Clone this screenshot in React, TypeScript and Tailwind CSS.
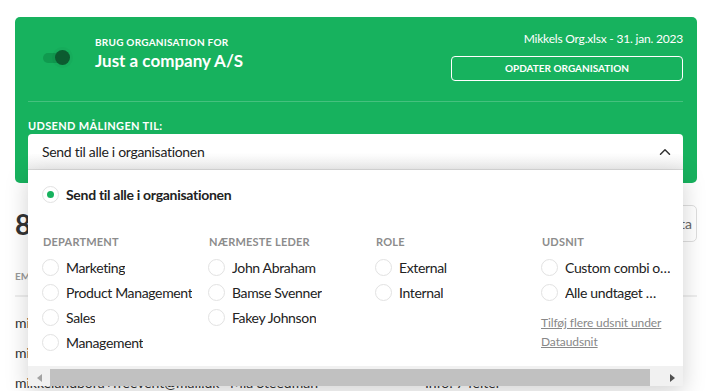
import React from "react"
import { ChevronUp } from "lucide-react"

type Group = {
  title: string
  width: string
  items: string[]
  link?: boolean
}

const groups: Group[] = [
  {
    title: "Department",
    width: "w-[166px]",
    items: ["Marketing", "Product Management", "Sales", "Management"],
  },
  {
    title: "Nærmeste leder",
    width: "w-[167px]",
    items: ["John Abraham", "Bamse Svenner", "Fakey Johnson"],
  },
  { title: "Role", width: "w-[166px]", items: ["External", "Internal"] },
  {
    title: "Udsnit",
    width: "w-[132px]",
    items: ["Custom combi o…", "Alle undtaget …"],
    link: true,
  },
]

const rows = [
  ["mikkel+1@mailinator.com", "John Abraham", "Info: 6 felter"],
  ["mikkel+2@mailinator.com", "Bamse Svenner", "Info: 6 felter"],
  ["mikkelandbora+freevent@mail.dk", "Mia Steedman", "Info: 7 felter"],
]

const Radio = ({ checked = false }: { checked?: boolean }) => (
  <span className="flex h-[17px] w-[17px] shrink-0 items-center justify-center rounded-full border border-[#e2e2e2] bg-white">
    {checked && <span className="h-[7px] w-[7px] rounded-full bg-[#17b25e]" />}
  </span>
)

const App = () => {
  return (
    <div className="h-[391px] w-[708px] overflow-hidden bg-white pl-[15px] pt-[17px] font-['Lato',sans-serif] [font-variant-ligatures:none]">
      {/* organisation card */}
      <div className="w-[682px] rounded-[5px] bg-[#17b25e] pb-[13px] pl-[13px] pr-[14px] pt-[14px] text-white">
        <div className="flex justify-between">
          <div className="flex items-start pt-[5px]">
            <div className="relative ml-[15px] mt-[17px] h-[10px] w-[23px] rounded-full bg-[#109a4f]">
              <span className="absolute right-[-4px] top-[-3px] h-[15px] w-[15px] rounded-full bg-[#0c5b30] shadow-[0_0_0_3px_rgba(0,0,0,0.03)]" />
            </div>
            <div className="ml-[29px]">
              <p className="text-[10px] font-bold uppercase leading-[12px] tracking-[0.25px]">
                Brug organisation for
              </p>
              <p className="mt-[2px] text-[17px] font-bold leading-[21px]">
                Just a company A/S
              </p>
            </div>
          </div>
          <div className="flex w-[232px] flex-col items-end">
            <p className="text-[12px] leading-[16px] tracking-[-0.2px]">
              Mikkels Org.xlsx - 31. jan. 2023
            </p>
            <button className="mt-[9px] h-[25px] w-full rounded-[4px] border border-white text-[10px] font-bold uppercase">
              Opdater organisation
            </button>
          </div>
        </div>

        <div className="mt-[20px] h-px bg-white/20" />

        <p className="mt-[17px] text-[11px] font-bold uppercase leading-[13px] tracking-[0.35px]">
          Udsend målingen til:
        </p>

        {/* select */}
        <div className="relative mt-[2px]">
          <div className="flex h-[36px] items-center justify-between rounded-t-[4px] border-b border-[#dadada] bg-linear-to-b from-white from-55% to-[#efefef] pl-[14px] pr-[9px] text-[14px] tracking-[-0.3px] text-[#222]">
            <span>Send til alle i organisationen</span>
            <ChevronUp size={18} strokeWidth={2} className="text-[#333]" />
          </div>

          <div className="absolute left-0 right-0 top-full z-10 flex h-[216px] flex-col overflow-hidden bg-white shadow-[0_6px_22px_rgba(0,0,0,0.18)]">
            <div className="flex-1 pl-[14px] pt-[16px] leading-[17px] text-[#222]">
              <div className="flex items-center gap-[7px]">
                <Radio checked />
                <span className="text-[14px] font-bold tracking-[-0.3px]">
                  Send til alle i organisationen
                </span>
              </div>

              <div className="mt-[32px] flex">
                {groups.map((g) => (
                  <div key={g.title} className={`flex shrink-0 flex-col ${g.width}`}>
                    <p className="pl-px text-[11px] font-bold uppercase leading-[13px] tracking-[0.2px] text-[#8c8c8c]">
                      {g.title}
                    </p>
                    <ul className="mt-[7px]">
                      {g.items.map((item) => (
                        <li key={item} className="flex h-[25px] items-center gap-[7px]">
                          <Radio />
                          <span className="truncate text-[14px] tracking-[-0.35px]">
                            {item}
                          </span>
                        </li>
                      ))}
                    </ul>
                    {g.link && (
                      <p className="mt-[8px] w-[126px] text-[12px] leading-[19px] tracking-[-0.1px] text-[#888] underline">
                        Tilføj flere udsnit under Dataudsnit
                      </p>
                    )}
                  </div>
                ))}
              </div>
            </div>

            {/* horizontal scrollbar */}
            <div className="flex h-[20px] items-end bg-[#f1f1f1]">
              <div className="flex h-[17px] w-[22px] items-center justify-center">
                <span className="h-0 w-0 border-y-[4px] border-r-[5px] border-y-transparent border-r-[#a3a3a3]" />
              </div>
              <div className="h-[17px] w-[600px] bg-[#c1c1c1]" />
              <div className="flex-1" />
              <div className="flex h-[17px] w-[22px] items-center justify-center">
                <span className="h-0 w-0 border-y-[4px] border-l-[5px] border-y-transparent border-l-[#505050]" />
              </div>
            </div>
          </div>
        </div>
      </div>

      {/* page content behind the dropdown */}
      <div className="w-[682px]">
        <div className="mt-[22px] flex items-center justify-between">
          <p className="text-[28px] font-bold leading-[34px] text-[#333]">
            8 medarbejdere
          </p>
          <div className="flex h-[37px] items-center rounded-[5px] border border-[#dedede] pl-[12px] pr-[4px] text-[14px] text-[#666]">
            Søg i data
          </div>
        </div>

        <div className="mt-[28px] flex border-b-2 border-[#eeeeee] pb-[13px] text-[10px] font-bold uppercase leading-[12px] text-[#999]">
          <span className="w-[215px]">Email</span>
          <span className="w-[195px]">Navn</span>
          <span>Info</span>
        </div>

        <div className="mt-[11px]">
          {rows.map((r) => (
            <div key={r[0]} className="flex text-[14px] leading-[30px] text-[#333]">
              <span className="w-[215px] truncate">{r[0]}</span>
              <span className="w-[195px]">{r[1]}</span>
              <span>{r[2]}</span>
            </div>
          ))}
        </div>
      </div>
    </div>
  )
}

export default App
